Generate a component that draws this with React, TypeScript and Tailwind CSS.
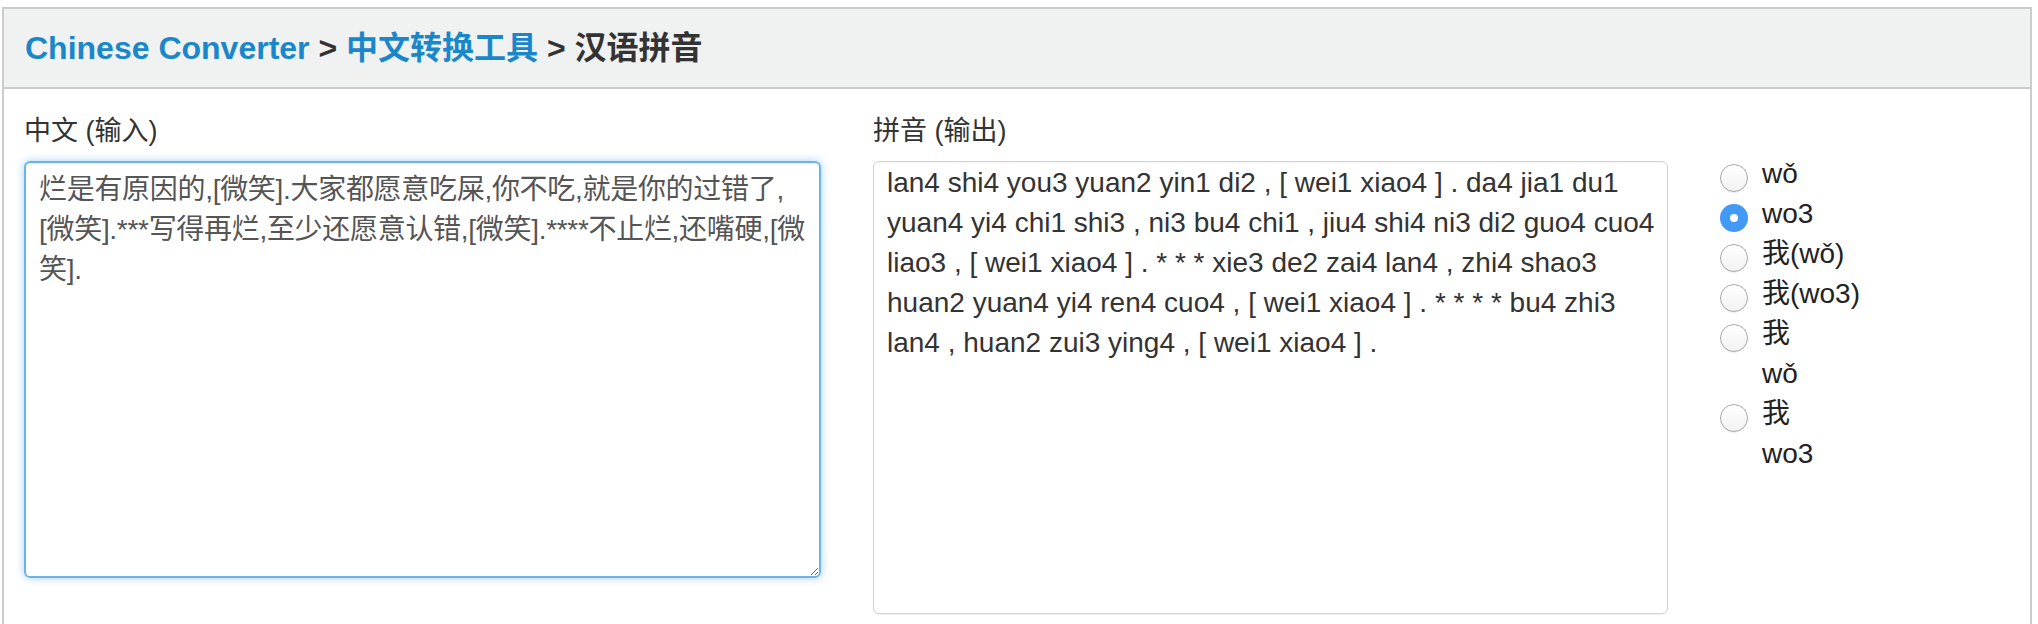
import { useState } from "react";

const input =
  "烂是有原因的,[微笑].大家都愿意吃屎,你不吃,就是你的过错了,[微笑].***写得再烂,至少还愿意认错,[微笑].****不止烂,还嘴硬,[微笑].";

const output =
  "lan4 shi4 you3 yuan2 yin1 di2 , [ wei1 xiao4 ] . da4 jia1 du1 yuan4 yi4 chi1 shi3 , ni3 bu4 chi1 , jiu4 shi4 ni3 di2 guo4 cuo4 liao3 , [ wei1 xiao4 ] . * * * xie3 de2 zai4 lan4 , zhi4 shao3 huan2 yuan4 yi4 ren4 cuo4 , [ wei1 xiao4 ] . * * * * bu4 zhi3 lan4 , huan2 zui3 ying4 , [ wei1 xiao4 ] .";

const options = [
  { id: "tone", lines: ["wǒ"] },
  { id: "num", lines: ["wo3"] },
  { id: "hz-tone", lines: ["我(wǒ)"] },
  { id: "hz-num", lines: ["我(wo3)"] },
  { id: "ruby-tone", lines: ["我", "wǒ"] },
  { id: "ruby-num", lines: ["我", "wo3"] },
];

const App = () => {
  const [text, setText] = useState(input);
  const [mode, setMode] = useState("num");

  return (
    <div className="min-h-screen bg-white pt-[7px] pl-[2px] pr-[6px] font-['Liberation_Sans','Noto_Sans_CJK_SC',sans-serif] text-[#333]">
      <div className="border-2 border-[#cccccc]">
        <div className="flex h-[80px] items-center border-b-2 border-[#cccccc] bg-[#f0f1f1] px-[21px]">
          <h3 className="text-[32px] font-bold leading-none">
            <a href="#" className="text-[#1b87cb]">
              Chinese Converter
            </a>{" "}
            &gt;{" "}
            <a href="#" className="text-[#1b87cb]">
              中文转换工具
            </a>{" "}
            &gt; 汉语拼音
          </h3>
        </div>

        <div className="flex px-[20px] pt-[23px] pb-[40px]">
          <div className="w-[797px] shrink-0">
            <label className="block text-[27px] leading-[38px] mb-[11px]">
              中文 (输入)
            </label>
            <textarea
              value={text}
              onChange={(e) => setText(e.target.value)}
              className="block h-[417px] w-full rounded-[6px] border-2 border-[#6cb3ee] px-[13px] py-[7px] text-[28px] leading-[40px] tracking-[-0.3px] text-[#555] shadow-[inset_0_1px_1px_rgba(0,0,0,0.075),0_0_8px_rgba(102,175,233,0.6)] outline-none"
            />
          </div>

          <div className="ml-[52px] w-[795px] shrink-0">
            <label className="block text-[27px] leading-[38px] mb-[11px]">
              拼音 (输出)
            </label>
            <div className="h-[453px] rounded-[6px] border border-[#d4d4d4] pl-[13px] pr-[11px] pt-[1px] text-[28px] leading-[40px] text-[#333] shadow-[inset_0_1px_1px_rgba(0,0,0,0.05),0_1px_1px_rgba(0,0,0,0.06)]">
              {output}
            </div>
          </div>

          <div className="ml-[52px] mt-[42px] flex flex-col">
            {options.map((opt) => (
              <label
                key={opt.id}
                className="flex cursor-pointer items-start"
                onClick={() => setMode(opt.id)}
              >
                {mode == opt.id ? (
                  <span className="mt-[10px] flex h-[28px] w-[28px] shrink-0 items-center justify-center rounded-full bg-[#4299f6]">
                    <span className="h-[8px] w-[8px] rounded-full bg-white" />
                  </span>
                ) : (
                  <span className="mt-[10px] h-[28px] w-[28px] shrink-0 rounded-full border border-[#a8a8a8] bg-gradient-to-b from-white to-[#f2f2f2] shadow-[0_1px_1px_rgba(0,0,0,0.08)]" />
                )}
                <span className="ml-[14px] text-[28px] leading-[40px] text-[#222]">
                  {opt.lines.map((l) => (
                    <span key={l} className="block">
                      {l}
                    </span>
                  ))}
                </span>
              </label>
            ))}
          </div>
        </div>
      </div>
    </div>
  );
};

export default App;
